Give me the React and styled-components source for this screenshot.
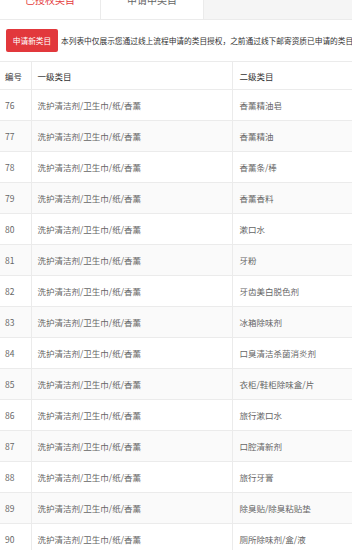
import React from 'react';
import styled, { createGlobalStyle } from 'styled-components';

const GlobalStyle = createGlobalStyle`
  html, body {
    margin: 0;
    padding: 0;
    background: #fff;
    overflow: hidden;
  }
  body {
    font-family: "Noto Sans CJK SC", "Noto Sans", sans-serif;
  }
`;

const rows = [
  ['76', '香薰精油皂'],
  ['77', '香薰精油'],
  ['78', '香薰条/棒'],
  ['79', '香薰香料'],
  ['80', '漱口水'],
  ['81', '牙粉'],
  ['82', '牙齿美白脱色剂'],
  ['83', '冰箱除味剂'],
  ['84', '口臭清洁杀菌消炎剂'],
  ['85', '衣柜/鞋柜除味盒/片'],
  ['86', '旅行漱口水'],
  ['87', '口腔清新剂'],
  ['88', '旅行牙膏'],
  ['89', '除臭贴/除臭粘贴垫'],
  ['90', '厕所除味剂/盒/液'],
];

const Page = styled.div`
  width: 352px;
  margin-top: -20px;
  overflow: hidden;
`;

const TabBar = styled.div`
  display: flex;
  height: 39px;
  background: #f5f5f5;
  border-bottom: 1px solid #ebebeb;
`;

const Tab = styled.div`
  display: flex;
  align-items: center;
  justify-content: center;
  width: ${(props) => props.width}px;
  background: #fff;
  border-right: 1px solid #ebebeb;
  font-size: 10px;
  color: ${(props) => (props.active ? '#e4393c' : '#666')};
`;

const Toolbar = styled.div`
  display: flex;
  align-items: center;
  gap: 3px;
  padding: 9px 0 9px 6px;
`;

const Button = styled.button`
  flex: none;
  width: 52px;
  height: 23px;
  padding: 0;
  border: none;
  border-radius: 2px;
  background: #e2383c;
  color: #fff;
  font-family: inherit;
  font-size: 7.7px;
`;

const Notice = styled.span`
  white-space: nowrap;
  font-size: 7.7px;
  color: #333;
`;

const Table = styled.table`
  width: 430px;
  border-collapse: collapse;
  table-layout: fixed;
  font-size: 8.5px;
  color: #666;
`;

const HeadCell = styled.th`
  height: 27px;
  padding: 0 0 0 ${(props) => props.pad}px;
  text-align: left;
  font-weight: normal;
  color: #333;
  border-top: 1px solid #ebebeb;
  border-bottom: 1px solid #ebebeb;
  border-left: 1px solid #ebebeb;
  &:first-child {
    border-left: none;
  }
`;

const Row = styled.tr`
  background: ${(props) => (props.striped ? '#fafafa' : '#fff')};
`;

const Cell = styled.td`
  height: 30px;
  padding: 0 0 0 ${(props) => props.pad}px;
  border-bottom: 1px solid #ebebeb;
  border-left: 1px solid #ebebeb;
  white-space: nowrap;
  &:first-child {
    border-left: none;
  }
`;

export default function App() {
  return (
    <Page>
      <GlobalStyle />
      <TabBar>
        <Tab width={100} active>已授权类目</Tab>
        <Tab width={102}>申请中类目</Tab>
      </TabBar>
      <Toolbar>
        <Button>申请新类目</Button>
        <Notice>
          本列表中仅展示您通过线上流程申请的类目授权，之前通过线下邮寄资质已申请的类目将不在此展示
        </Notice>
      </Toolbar>
      <Table>
        <colgroup>
          <col style={{ width: 31 }} />
          <col style={{ width: 201 }} />
          <col />
        </colgroup>
        <thead>
          <tr>
            <HeadCell pad={5}>编号</HeadCell>
            <HeadCell pad={6}>一级类目</HeadCell>
            <HeadCell pad={7}>二级类目</HeadCell>
          </tr>
        </thead>
        <tbody>
          {rows.map(([id, name], i) => (
            <Row key={id} striped={i % 2 === 1}>
              <Cell pad={5}>{id}</Cell>
              <Cell pad={6}>洗护清洁剂/卫生巾/纸/香薰</Cell>
              <Cell pad={7}>{name}</Cell>
            </Row>
          ))}
        </tbody>
      </Table>
    </Page>
  );
}
